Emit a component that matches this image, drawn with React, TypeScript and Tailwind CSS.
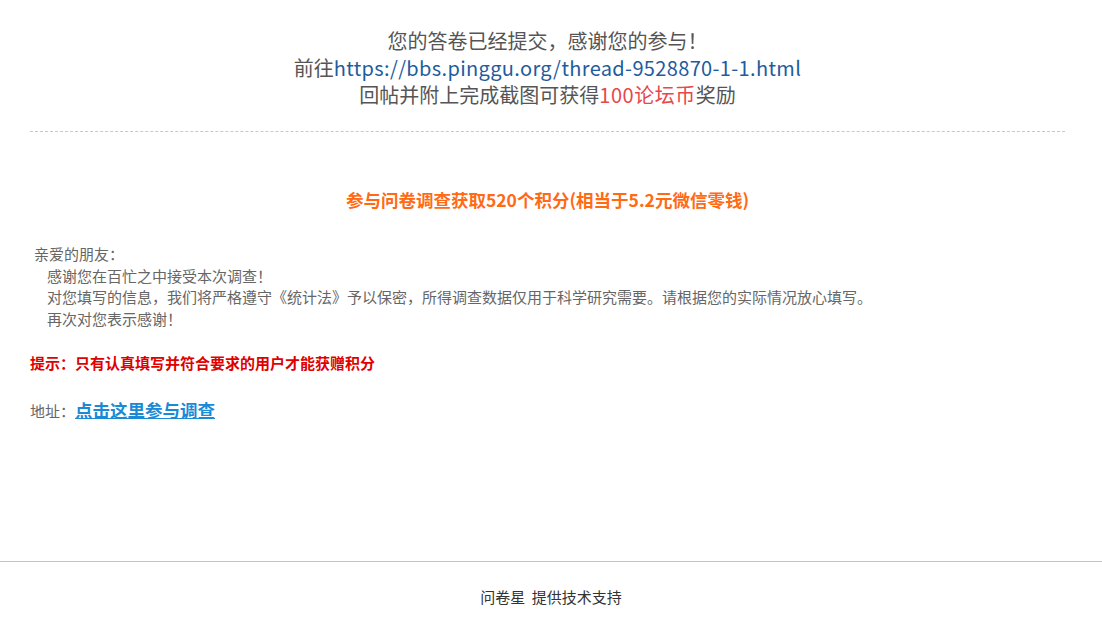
export default function App() {
  const font = { fontFamily: '"Noto Sans CJK SC", "Noto Sans", sans-serif' };
  return (
    <div className="min-h-[618px] w-full bg-white flex flex-col" style={font}>
      <div className="ml-[30px] mr-[37px] flex-1 flex flex-col">
        <div className="pt-[27px] pb-[23px] text-center text-[20px] leading-[27px] text-[#555555] border-b border-dashed border-[#c8c8c8]">
          <div>您的答卷已经提交，感谢您的参与！</div>
          <div>
            前往<span className="text-[#1d5c9e] tracking-[0.35px]">https://bbs.pinggu.org/thread-9528870-1-1.html</span>
          </div>
          <div>
            回帖并附上完成截图可获得<span className="text-[#e8474c] tracking-[0.5px]">100论坛币</span>奖励
          </div>
        </div>
        <div className="pt-[56px] text-center text-[17.5px] leading-[24px] font-bold text-[#ff6a13]">
          参与问卷调查获取520个积分(相当于5.2元微信零钱)
        </div>
        <div className="pt-[31px] pl-[4px] text-[15px] leading-[21.7px] text-[#666666]">
          <div>亲爱的朋友：</div>
          <div className="pl-[13px]">感谢您在百忙之中接受本次调查！</div>
          <div className="pl-[13px]">对您填写的信息，我们将严格遵守《统计法》予以保密，所得调查数据仅用于科学研究需要。请根据您的实际情况放心填写。</div>
          <div className="pl-[13px]">再次对您表示感谢！</div>
        </div>
        <div className="pt-[21px] text-[15px] leading-[24px] font-bold text-[#e00000]">
          提示：只有认真填写并符合要求的用户才能获赠积分
        </div>
        <div className="pt-[22px] flex items-baseline text-[15px] text-[#666666]">
          <span>地址：</span>
          <a className="text-[17.5px] font-bold text-[#1a8ad4] underline">点击这里参与调查</a>
        </div>
      </div>
      <div className="border-t border-[#c4c4c4] h-[57px] pt-[24px] text-center leading-[22px] text-[15px] text-[#333333]">
        <span className="mr-[3px]">问卷星</span> 提供技术支持
      </div>
    </div>
  );
}
